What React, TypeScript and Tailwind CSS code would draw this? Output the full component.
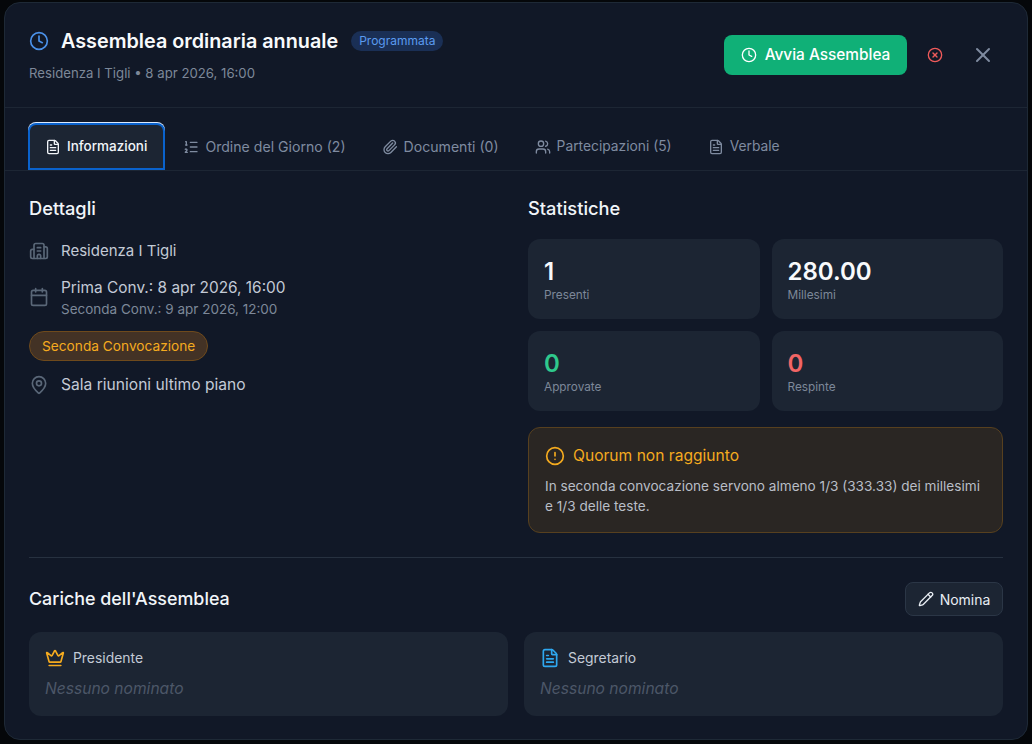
import { Clock, CircleX, X, FileText, ListOrdered, Paperclip, Users, Building2, Calendar, MapPin, CircleAlert, Crown, Pencil } from "lucide-react";

const font = "font-['Inter','Noto_Sans',sans-serif]";

function Stat({ value, label, color }: { value: string; label: string; color: string }) {
  return (
    <div className="h-[80px] rounded-xl bg-[#1c2533] px-4 pt-[17px]">
      <div className={`text-[24px] leading-[31px] font-semibold ${color}`}>{value}</div>
      <div className="text-[11.8px] leading-[16px] text-[#7d8899]">{label}</div>
    </div>
  );
}

function Tab({ icon, label, size }: { icon: React.ReactNode; label: string; size: string }) {
  return (
    <div className={`flex h-[47px] items-center gap-[6px] px-4 text-[#7f8ba0] ${size}`}>
      {icon}
      <span>{label}</span>
    </div>
  );
}

function Role({ icon, label }: { icon: React.ReactNode; label: string }) {
  return (
    <div className="h-[84px] flex-1 rounded-xl bg-[#1c2533] px-4 pt-[16px]">
      <div className="flex h-[20px] items-center gap-[8px] text-[13.9px] text-[#c3cad6]">
        {icon}
        <span>{label}</span>
      </div>
      <div className="mt-[11px] text-[15.6px] italic leading-[20px] text-[#4c5768]">Nessuno nominato</div>
    </div>
  );
}

export default function App() {
  return (
    <div className={`h-[744px] w-[1032px] overflow-hidden bg-[#05070a] px-[4px] pt-[2px] ${font}`}>
      <div className="h-[738px] w-[1024px] overflow-hidden rounded-2xl border border-[#1e2936] bg-[#111827]">
        <div className="flex h-[105px] items-start justify-between border-b border-[#1d2634] pl-[24px] pr-[32px]">
          <div className="pt-[24px]">
            <div className="flex items-center gap-3">
              <Clock className="h-5 w-5 text-[#4a90e8]" />
              <h1 className="text-[19.8px] leading-[28px] font-semibold text-[#f8fafc]">Assemblea ordinaria annuale</h1>
              <span className="ml-[1px] rounded-full bg-[#1a2f55] px-2 py-[2px] text-[12px] leading-[16px] text-[#5b9bf0]">Programmata</span>
            </div>
            <p className="mt-[8px] text-[13.2px] leading-[20px] text-[#7d8899]">Residenza I Tigli • 8 apr 2026, 16:00</p>
          </div>
          <div className="flex items-center pt-[32px]">
            <button className="flex h-[40px] w-[183px] items-center justify-center gap-2 rounded-lg bg-[#10b077] text-[15.4px] font-medium text-white">
              <Clock className="h-4 w-4" />
              Avvia Assemblea
            </button>
            <CircleX className="ml-[20px] h-4 w-4 text-[#ef5a5a]" />
            <X className="ml-[28px] h-6 w-6 text-[#7f8ba0]" />
          </div>
        </div>

        <div className="flex h-[63px] items-end gap-[4px] border-b border-[#1d2634] pl-[24px]">
          <div className="-ml-[1px] -mr-[2px] flex h-[47px] items-center gap-[6px] rounded-t-lg border-2 border-[#0a62cc] bg-[#1c2533] pl-[15px] pr-[16px] text-[13.5px] font-medium text-[#f1f5f9] shadow-[0_-1px_0_#dbeafe]">
            <FileText className="h-4 w-4" />
            <span>Informazioni</span>
          </div>
          <Tab size="text-[14.1px]" icon={<ListOrdered className="h-4 w-4" />} label="Ordine del Giorno (2)" />
          <Tab size="text-[14.1px]" icon={<Paperclip className="h-4 w-4" />} label="Documenti (0)" />
          <Tab size="text-[13.8px]" icon={<Users className="h-4 w-4" />} label="Partecipazioni (5)" />
          <Tab size="text-[13.8px]" icon={<FileText className="h-4 w-4" />} label="Verbale" />
        </div>

        <div className="px-[24px] pt-[24px]">
          <div className="grid grid-cols-[475px_475px] gap-x-[24px]">
            <div>
              <h2 className="text-[18.3px] leading-[27px] font-medium text-[#f1f5f9]">Dettagli</h2>
              <div className="mt-[17px] flex items-center gap-3 text-[15px] leading-[24px] text-[#c3cad6]">
                <Building2 className="h-5 w-5 text-[#5a6778]" />
                Residenza I Tigli
              </div>
              <div className="mt-[12px] flex items-center gap-3">
                <Calendar className="h-5 w-5 text-[#5a6778]" />
                <div>
                  <div className="text-[15.4px] leading-[25px] text-[#c3cad6]">Prima Conv.: 8 apr 2026, 16:00</div>
                  <div className="text-[13.5px] leading-[19px] text-[#7d8899]">Seconda Conv.: 9 apr 2026, 12:00</div>
                </div>
              </div>
              <span className="mt-[12px] inline-block h-[30px] rounded-full border border-[#6f4a1c] bg-[#433225] px-3 text-[13.7px] leading-[28px] text-[#f5ab1f]">Seconda Convocazione</span>
              <div className="mt-[12px] flex items-center gap-3 text-[15.6px] leading-[24px] text-[#c3cad6]">
                <MapPin className="h-5 w-5 text-[#5a6778]" />
                Sala riunioni ultimo piano
              </div>
            </div>
            <div>
              <h2 className="text-[18.3px] leading-[27px] font-medium text-[#f1f5f9]">Statistiche</h2>
              <div className="mt-[17px] grid grid-cols-2 gap-3">
                <Stat value="1" label="Presenti" color="text-[#f8fafc]" />
                <Stat value="280.00" label="Millesimi" color="text-[#f8fafc]" />
                <Stat value="0" label="Approvate" color="text-[#2fc98d]" />
                <Stat value="0" label="Respinte" color="text-[#f26565]" />
              </div>
              <div className="mt-[16px] h-[106px] rounded-xl border border-[#57401f] bg-[#2a2623] px-4 pt-[18px]">
                <div className="flex items-center gap-2 text-[15.6px] leading-[20px] text-[#f5ab1f]">
                  <CircleAlert className="h-5 w-5" />
                  Quorum non raggiunto
                </div>
                <p className="mt-[10px] text-[13.6px] leading-[20px] text-[#b9bec7]">In seconda convocazione servono almeno 1/3 (333.33) dei millesimi e 1/3 delle teste.</p>
              </div>
            </div>
          </div>

          <div className="mt-[24px] border-t border-[#273140] pt-[24px]">
            <div className="flex h-[34px] items-center justify-between">
              <h2 className="text-[17.9px] leading-[27px] -mt-[1px] font-medium text-[#f1f5f9]">Cariche dell'Assemblea</h2>
              <button className="flex h-[34px] w-[98px] items-center justify-center gap-[6px] rounded-lg border border-[#2b3646] bg-[#1c2533] text-[14px] text-[#e8edf3]">
                <Pencil className="h-4 w-4" />
                Nomina
              </button>
            </div>
            <div className="mt-[16px] flex gap-[16px]">
              <Role icon={<Crown className="h-5 w-5 text-[#f5ab1f]" />} label="Presidente" />
              <Role icon={<FileText className="h-5 w-5 text-[#2ea8f0]" />} label="Segretario" />
            </div>
          </div>
        </div>
      </div>
    </div>
  );
}
